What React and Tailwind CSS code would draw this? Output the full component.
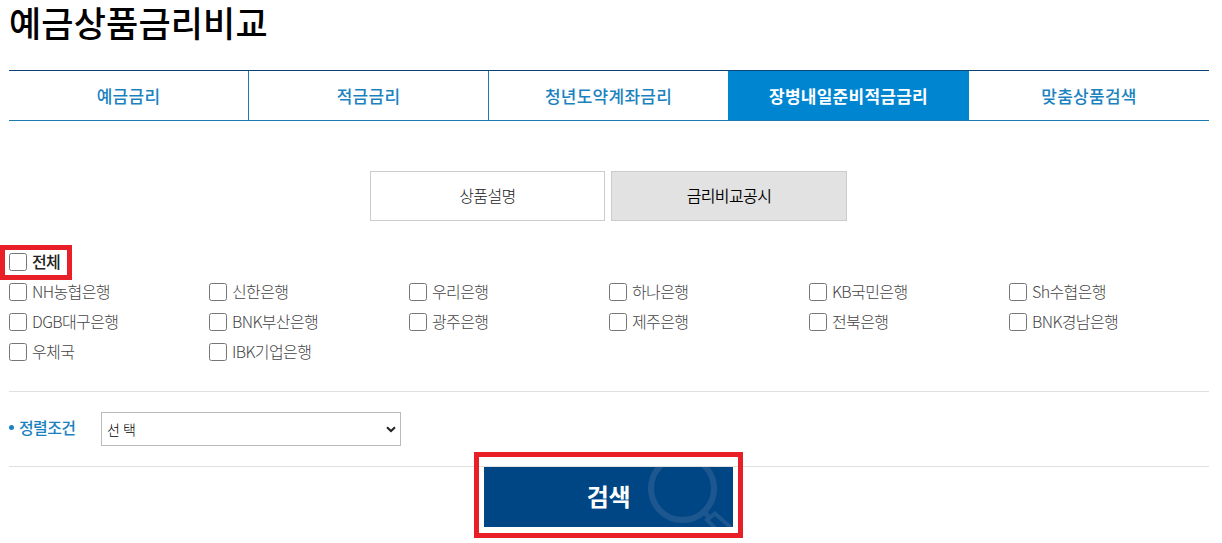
import { useState } from "react";

const tabs = ["예금금리", "적금금리", "청년도약계좌금리", "장병내일준비적금금리", "맞춤상품검색"];

const banks = [
  "NH농협은행", "신한은행", "우리은행", "하나은행", "KB국민은행", "Sh수협은행",
  "DGB대구은행", "BNK부산은행", "광주은행", "제주은행", "전북은행", "BNK경남은행",
  "우체국", "IBK기업은행",
];

// Checkbox with its label
function CheckItem({ label, checked, onChange, bold }) {
  return (
    <label className="flex h-[30px] items-center gap-[5px]">
      <input
        type="checkbox"
        checked={checked}
        onChange={onChange}
        className="h-[18px] w-[18px] shrink-0 appearance-none rounded-[2.5px] border border-[#767676] bg-white checked:bg-[#0086d1]"
      />
      <span
        className={
          bold
            ? "pb-[2px] text-[16px] leading-[28px] tracking-[-0.6px] font-medium text-[#222]"
            : "pb-[2px] text-[16px] leading-[28px] tracking-[-0.6px] font-light text-[#444]"
        }
      >
        {label}
      </span>
    </label>
  );
}

export default function App() {
  const [activeTab, setActiveTab] = useState(3);
  const [selected, setSelected] = useState([]);

  const toggleBank = (bank) => {
    setSelected((prev) =>
      prev.includes(bank) ? prev.filter((b) => b !== bank) : [...prev, bank]
    );
  };

  const allSelected = selected.length === banks.length;

  return (
    <div className="w-[1222px] bg-white pl-[9px] pr-[13px] font-['Noto_Sans_CJK_KR',sans-serif]">
      <h1 className="h-[70px] text-[35px] leading-[44px] tracking-[0.15px] font-medium text-black">
        예금상품금리비교
      </h1>

      {/* Tabs */}
      <nav className="flex h-[51px] border-t border-b border-t-[#0b4475] border-b-[#1b7ab0]">
        {tabs.map((tab, i) => (
          <button
            key={tab}
            onClick={() => setActiveTab(i)}
            className={
              "w-[240px] text-[17px] tracking-[0.25px] " +
              (i === activeTab
                ? "-ml-px w-[241px] bg-[#0086d1] font-bold text-white"
                : "font-medium text-[#1b82c0] " +
                  (i < activeTab ? "border-r border-[#1b7ab0]" : ""))
            }
          >
            {tab}
          </button>
        ))}
      </nav>

      {/* Sub menu */}
      <div className="mt-[50px] ml-[361px] flex gap-[6px]">
        <button className="h-[50px] w-[235px] border border-[#ccc] bg-white pb-[2px] text-[16px] tracking-[-0.6px] font-light text-[#222]">
          상품설명
        </button>
        <button className="h-[50px] w-[236px] border border-[#ccc] bg-[#e2e2e2] pb-[2px] text-[16px] tracking-[-0.6px] font-[350] text-black">
          금리비교공시
        </button>
      </div>

      {/* Bank list */}
      <div className="mt-[26px] h-[145px] border-b border-[#e0e0e0]">
        <div className="relative w-[60px]">
          <CheckItem
            label="전체"
            bold
            checked={allSelected}
            onChange={() => setSelected(allSelected ? [] : banks)}
          />
          <div className="pointer-events-none absolute -top-[2px] -left-[9px] h-[35px] w-[72px] border-5 border-[#e81f27]" />
        </div>
        <div className="grid grid-cols-[repeat(6,200px)]">
          {banks.map((bank) => (
            <CheckItem
              key={bank}
              label={bank}
              checked={selected.includes(bank)}
              onChange={() => toggleBank(bank)}
            />
          ))}
        </div>
      </div>

      {/* Sort condition */}
      <div className="flex h-[75px] items-center border-b border-[#e0e0e0]">
        <span className="mr-[5px] mb-[3px] h-[5px] w-[5px] rounded-full bg-[#1b82c0]" />
        <span className="w-[82px] pb-[4px] text-[16px] leading-[30px] tracking-[-0.6px] font-medium text-[#1b82c0]">
          정렬조건
        </span>
        <div className="flex h-[34px] w-[300px] items-center justify-between border border-[#bbb] pr-[4px] pl-[5px]">
          <span className="text-[14px] font-light text-black">선 택</span>
          <svg width="10" height="7" viewBox="0 0 10 7" fill="none">
            <path d="M1 1.2 L5 5 L9 1.2" stroke="#222" strokeWidth="2" />
          </svg>
        </div>
      </div>

      {/* Search button */}
      <div className="relative mb-[16px] ml-[475px] h-[60px] w-[249px]">
        <button className="relative h-[60px] w-[249px] overflow-hidden bg-[#004684] pb-[3px] text-[24px] tracking-[-0.3px] font-bold text-white">
          검색
          <svg className="absolute inset-0" width="249" height="60" viewBox="0 0 249 60" fill="none">
            <g stroke="#1d5790">
              <circle cx="198.500" cy="21.500" r="31.500" strokeWidth="6" />
              <path d="M219 44 L225 50" strokeWidth="5" />
              <path d="M237 67 L223 53 L231 46.500 L252 65" strokeWidth="4" />
            </g>
          </svg>
        </button>
        <div className="pointer-events-none absolute -top-[15px] -left-[10px] h-[86px] w-[269px] border-5 border-[#e81f27]" />
      </div>
    </div>
  );
}
